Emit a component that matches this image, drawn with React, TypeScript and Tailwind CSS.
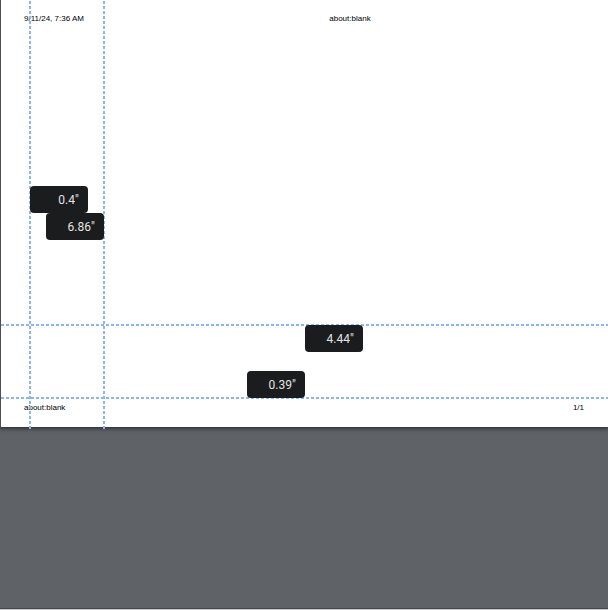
type Margin = { name: string; value: string; place: string };

const margins: Margin[] = [
  { name: "Left margin", value: "0.4", place: "left-[29px] top-[186px]" },
  { name: "Right margin", value: "6.86", place: "left-[45px] top-[213px]" },
  { name: "Top margin", value: "4.44", place: "left-[304px] top-[325px]" },
  { name: "Bottom margin", value: "0.39", place: "left-[246px] top-[371px]" },
];

const vertical =
  "pointer-events-none absolute top-0 -bottom-0.5 w-0.5 bg-[repeating-linear-gradient(to_top,#8ab4f8_0px,#8ab4f8_3px,transparent_3px,transparent_5px)]";
const horizontal =
  "pointer-events-none absolute inset-x-0 h-0.5 bg-[repeating-linear-gradient(to_right,#8ab4f8_0px,#8ab4f8_3px,transparent_3px,transparent_5px)]";

function MarginBox({ name, value, place }: Margin) {
  return (
    <label
      className={`absolute flex h-[27px] w-[58px] items-center rounded bg-[#1b1c1e] pr-2 font-['Roboto',sans-serif] text-xs text-[#e3e3e3] ${place}`}
    >
      <input
        aria-label={name}
        defaultValue={value}
        className="h-full w-0 min-w-0 flex-1 bg-transparent text-right outline-none"
      />
      <span className="w-[5px]">"</span>
    </label>
  );
}

export default function App() {
  return (
    <div className="flex min-h-screen flex-col bg-[#5f6368] font-['Liberation_Sans',Arial,sans-serif]">
      <main className="flex-1">
        <section
          aria-label="Print preview"
          className="relative flex min-h-[427px] flex-col justify-between border-l border-[#4c4e52] bg-white px-6 pt-[15px] pb-[13px] text-[8px] leading-3 text-black shadow-[0_1px_4px_1px_rgba(0,0,0,0.5)]"
        >
          <header className="-ml-px flex h-2 items-center gap-8">
            <time>9/11/24, 7:36 AM</time>
            <h1 className="flex-1 text-center">about:blank</h1>
          </header>
          <footer className="-ml-px flex items-center justify-between">
            <span>about:blank</span>
            <span>1/1</span>
          </footer>
          <div className={`${vertical} left-7`} />
          <div className={`${vertical} left-[102px]`} />
          <div className={`${horizontal} top-[324px]`} />
          <div className={`${horizontal} top-[397px]`} />
          {margins.map((margin) => (
            <MarginBox key={margin.name} {...margin} />
          ))}
        </section>
      </main>
      <div className="h-0.5 border-t border-[#454648] bg-[#c8c8c8]" />
    </div>
  );
}
